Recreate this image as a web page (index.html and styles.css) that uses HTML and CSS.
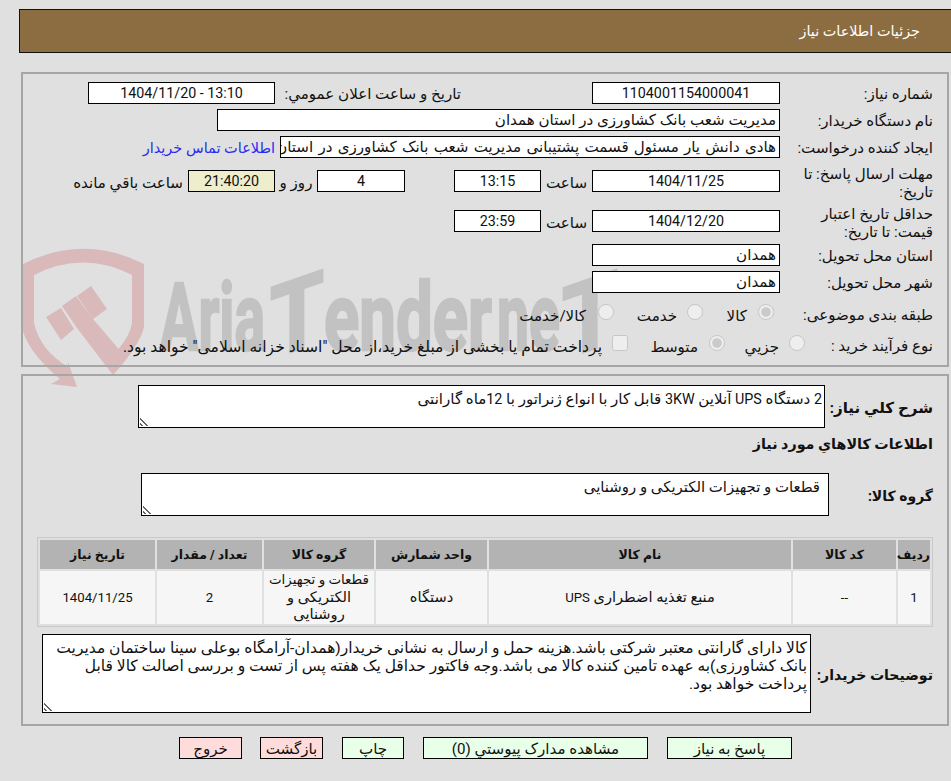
FILE: index.html
```html
<!DOCTYPE html>
<html lang="fa" dir="rtl">
<head>
<meta charset="utf-8">
<title>جزئیات اطلاعات نیاز</title>
<link rel="stylesheet" href="styles.css">
</head>
<body>
<svg class="watermark" width="951" height="781" viewBox="0 0 951 781" aria-hidden="true">
  <path class="wm-shield" fill-rule="evenodd" d="M21 265 Q83 233 144 264 L144 327 Q140 345 113 375 L105 362 L120 347 Q130 335 132 323 L132 275 Q83 250 34 275 L34 323 Q40 350 68 367 L68 362 L77 387 L51 384 L60 379 Q25 350 21 323 Z"/>
  <path class="wm-shield" d="M46 317 L61 308 L74 329 L61 340 Z M62 306 L76 296 L93 319 L122 353 L113 375 L77 328 Z M77 296 L91 286 L107 309 L93 319 Z"/>
  <text class="wm-text" x="160" y="350" textLength="105" lengthAdjust="spacingAndGlyphs">Aria</text>
  <text class="wm-text wm-big" x="270" y="350" textLength="54" lengthAdjust="spacingAndGlyphs" transform="translate(297 350) skewY(-19) translate(-297 -350)">T</text>
  <text class="wm-text" x="324" y="350" textLength="168" lengthAdjust="spacingAndGlyphs">ender</text>
  <text class="wm-text" x="497" y="350" textLength="63" lengthAdjust="spacingAndGlyphs">ne</text>
  <text class="wm-text wm-big" x="562" y="350" textLength="56" lengthAdjust="spacingAndGlyphs" transform="translate(590 350) skewY(-19) translate(-590 -350)">T</text>
</svg>
<header class="title-bar"><span>جزئیات اطلاعات نیاز</span></header>

<section class="panel info">
  <div class="row r1">
    <label class="lab">شماره نیاز:</label>
    <div class="box w188 c num">1104001154000041</div>
    <label class="lab-mid">تاریخ و ساعت اعلان عمومي:</label>
    <div class="box w187 c num">13:10 - 1404/11/20</div>
  </div>
  <div class="row r2">
    <label class="lab">نام دستگاه خریدار:</label>
    <div class="box w563">مدیریت شعب بانک کشاورزی در استان همدان</div>
  </div>
  <div class="row r3">
    <label class="lab">ایجاد کننده درخواست:</label>
    <div class="box w500 clip">هادی دانش یار مسئول قسمت پشتیبانی مدیریت شعب بانک کشاورزی در استان همدان</div>
    <a class="contact" href="#">اطلاعات تماس خریدار</a>
  </div>
  <div class="row r4">
    <label class="lab two">مهلت ارسال پاسخ: تا تاریخ:</label>
    <div class="box w188 c num">1404/11/25</div>
    <span class="unit">ساعت</span>
    <div class="box w87 c num">13:15</div>
    <div class="box w88 c days num">4</div>
    <span class="rooz">روز و</span>
    <div class="box w87 c timer num">21:40:20</div>
    <span class="left">ساعت باقي مانده</span>
  </div>
  <div class="row r5">
    <label class="lab two">حداقل تاریخ اعتبار قیمت: تا تاریخ:</label>
    <div class="box w188 c num">1404/12/20</div>
    <span class="unit">ساعت</span>
    <div class="box w87 c num">23:59</div>
  </div>
  <div class="row r6">
    <label class="lab">استان محل تحویل:</label>
    <div class="box w188">همدان</div>
  </div>
  <div class="row r7">
    <label class="lab">شهر محل تحویل:</label>
    <div class="box w188">همدان</div>
  </div>
  <div class="row r8">
    <label class="lab">طبقه بندی موضوعی:</label>
    <div class="opts">
      <label class="opt o1"><input type="radio" name="cat" checked disabled><span>کالا</span></label>
      <label class="opt o2"><input type="radio" name="cat" disabled><span>خدمت</span></label>
      <label class="opt o3"><input type="radio" name="cat" disabled><span>کالا/خدمت</span></label>
    </div>
  </div>
  <div class="row r9">
    <label class="lab">نوع فرآیند خرید :</label>
    <div class="opts">
      <label class="opt o4"><input type="radio" name="proc" disabled><span>جزیي</span></label>
      <label class="opt o5"><input type="radio" name="proc" checked disabled><span>متوسط</span></label>
      <label class="opt o6"><input type="checkbox" disabled><span>پرداخت تمام یا بخشی از مبلغ خرید،از محل "اسناد خزانه اسلامی" خواهد بود.</span></label>
    </div>
  </div>
</section>

<section class="panel detail">
  <div class="row desc">
    <label class="lab strong">شرح کلي نیاز:</label>
    <div class="area a1"><span><b class="lat">2</b> دستگاه <b class="lat">UPS</b> آنلاین <b class="lat">3KW</b> قابل کار با انواع ژنراتور با <b class="lat">12</b>ماه گارانتی</span><i class="grip"></i></div>
  </div>
  <h2 class="subhead">اطلاعات کالاهاي مورد نیاز</h2>
  <div class="row group">
    <label class="lab strong">گروه کالا:</label>
    <div class="area a2"><span>قطعات و تجهیزات الکتریکی و روشنایی</span><i class="grip"></i></div>
  </div>
  <table class="items">
    <colgroup>
      <col class="k1"><col class="k2"><col class="k3"><col class="k4"><col class="k5"><col class="k6"><col class="k7">
    </colgroup>
    <thead>
      <tr><th>ردیف</th><th>کد کالا</th><th>نام کالا</th><th>واحد شمارش</th><th>گروه کالا</th><th>تعداد / مقدار</th><th>تاریخ نیاز</th></tr>
    </thead>
    <tbody>
      <tr><td class="tnum">1</td><td class="tnum">--</td><td>منبع تغذیه اضطراری <b class="tlat">UPS</b></td><td>دستگاه</td><td><span class="squeeze">قطعات و تجهیزات</span><br>الکتریکی و<br>روشنایی</td><td class="tnum">2</td><td class="tnum">1404/11/25</td></tr>
    </tbody>
  </table>
  <div class="row notes">
    <label class="lab strong">توضیحات خریدار:</label>
    <div class="area a3"><span>کالا دارای گارانتی معتبر شرکتی باشد.هزینه حمل و ارسال به نشانی خریدار(همدان-آرامگاه بوعلی سینا ساختمان مدیریت بانک کشاورزی)به عهده تامین کننده کالا می باشد.وجه فاکتور حداقل یک هفته پس از تست و بررسی اصالت کالا قابل پرداخت خواهد بود.</span><i class="grip"></i></div>
  </div>
</section>

<footer class="actions">
  <button class="btn green b1">پاسخ به نیاز</button>
  <button class="btn green b2">مشاهده مدارک پیوستي (0)</button>
  <button class="btn green b3">چاپ</button>
  <button class="btn pink b4">بازگشت</button>
  <button class="btn pink b5">خروج</button>
</footer>
</body>
</html>
```
FILE: styles.css
```css
* { box-sizing: border-box; }
html { background: #e0e0e0; }
body {
  margin: 0;
  height: 781px;
  overflow: hidden;
  position: relative;
  font-size: 15.1px;
  line-height: 18px;
  font-family: "Roboto", "DejaVu Sans", sans-serif;
  color: #111;
}
.num, .lat { font-size: 14.3px; font-weight: 400; }
.watermark { position: absolute; left: 0; top: 0; z-index: -1; direction: ltr; }
.wm-shield { fill: #dab9bb; }
.wm-text {
  fill: #c2c2c2;
  stroke: #c2c2c2;
  stroke-width: 2.5px;
  font-family: "Roboto", sans-serif;
  font-weight: 700;
  font-size: 94px;
  direction: ltr;
}
.wm-big { font-size: 100px; }

.title-bar {
  height: 44px;
  margin: 9px 0 19px 19px;
  background: #8c6d42;
  border: 1px solid #111;
  border-right: 0;
  color: #fff;
  font-size: 14.4px;
  display: flex;
  align-items: center;
  padding: 2px 31px 0 0;
}
.panel {
  border: 2px solid #a6a6a6;
  margin: 0 2px 7px 21px;
  padding-right: 14px;
  position: relative;
}
.info { height: 295px; padding-top: 8px; }
.detail { height: 352px; padding-top: 9px; margin-bottom: 11px; }
.row { display: flex; align-items: center; }
.lab { width: 153px; padding: 2px 0 0 4px; flex: none; line-height: 18px; }
.two { padding-top: 4px; }
.strong { font-weight: 700; white-space: nowrap; padding-left: 0; }
.box {
  height: 22px;
  background: #fff;
  border: 1px solid #000;
  line-height: 20px;
  padding: 0 3px;
  flex: none;
  white-space: nowrap;
}
.c { text-align: center; }
.clip { overflow: hidden; word-spacing: 1.5px; }
.w188 { width: 188px; }
.w187 { width: 187px; }
.w563 { width: 563px; }
.w500 { width: 500px; }
.w87 { width: 87px; }
.w88 { width: 88px; }
.lab-mid { width: 317px; padding: 2px 131px 0 0; flex: none; white-space: nowrap; }
.r2, .r3 { margin-top: 5px; }
.contact { color: #2a2af0; text-decoration: none; margin-right: 5px; padding-top: 3px; white-space: nowrap; font-size: 14.5px; }
.r4 { margin-top: 8px; height: 30px; }
.r5 { margin-top: 9px; height: 32px; }
.r6 { margin-top: 7px; }
.r7 { margin-top: 5px; }
.unit { width: 51px; flex: none; text-align: center; padding-top: 3px; }
.days { margin-right: 49px; }
.rooz { width: 42px; flex: none; text-align: center; white-space: nowrap; padding-top: 3px; }
.timer { background: #eeeecc; }
.left { margin-right: 5px; white-space: nowrap; padding-top: 3px; }
.r8 { margin-top: 8px; height: 26px; }
.r9 { margin-top: 2px; height: 32px; }
.r9 .lab { width: 128px; }
.opts { display: flex; }
.opt { display: flex; align-items: center; white-space: nowrap; }
.opt input { margin: 0; flex: none; width: 16px; height: 16px; position: relative; top: -2px; }
.opt span { display: block; flex: none; padding-top: 4px; }
.o1 { margin-right: 6px; }
.o1 span { margin-right: 11px; width: 44px; }
.o2 span { margin-right: 10px; width: 63px; }
.o3 span { margin-right: 12px; }
.o4 span { margin-right: 10px; width: 54px; }
.o5 span { margin-right: 11px; width: 70px; }
.o6 span { margin-right: 10px; font-size: 15.6px; }

.area {
  position: relative;
  background: #fff;
  border: 1px solid #000;
  flex: none;
  padding: 4px;
  line-height: 18px;
}
.grip {
  position: absolute;
  left: 1px;
  bottom: 1px;
  width: 10px;
  height: 10px;
  background: repeating-linear-gradient(45deg, #fff 0 1px, #666 1px 2.4px, #fff 2.4px 3.4px);
  clip-path: polygon(0 0, 100% 100%, 0 100%);
}
.desc .lab { width: 108px; }
.a1 { width: 687px; height: 43px; padding-right: 2px; font-size: 15.05px; }
.subhead { font-size: 14.3px; line-height: 18px; margin: 7px 0 0; font-weight: 700; }
.group { margin-top: 20px; }
.group .lab { width: 104px; font-size: 14px; }
.a2 { width: 688px; height: 43px; padding-right: 8px; font-size: 14.9px; }
.items {
  margin-top: 21px;
  width: 895px;
  height: 90px;
  border: 1px solid #c9c9c9;
  border-collapse: separate;
  border-spacing: 2px;
  table-layout: fixed;
}
.k1 { width: 32px; } .k2 { width: 103px; } .k3 { width: 302px; } .k4 { width: 111px; }
.k5 { width: 110px; } .k6 { width: 105px; } .k7 { width: 115px; }
.items th { background: #b3b3b3; height: 29px; padding: 0; font-weight: 700; font-size: 12.5px; white-space: nowrap; }
.items td { background: #f6f6f6; height: 53px; padding: 0; text-align: center; line-height: 17.5px; font-size: 14.6px; }
.items td.tnum, .tlat { font-size: 13.2px; font-weight: 400; }
.squeeze { font-size: 13.4px; }
.notes { margin-top: 7px; }
.notes .lab { width: 122px; font-size: 14.1px; }
.a3 { width: 769px; height: 79px; padding: 4px 3px 4px 2px; font-size: 15.5px; }
.actions {
  display: flex;
  padding-right: 159px;
}
.btn {
  height: 22px;
  border: 1px solid #000;
  font: inherit;
  color: #111;
  padding: 2px 0 0;
  flex: none;
}
.green { background: #e8ffe8; }
.pink { background: #ffdcdc; }
.b1 { width: 125px; }
.b2 { width: 225px; margin-right: 19px; }
.b3 { width: 62px; margin-right: 19px; }
.b4 { width: 63px; margin-right: 19px; }
.b5 { width: 63px; margin-right: 18px; }
```
